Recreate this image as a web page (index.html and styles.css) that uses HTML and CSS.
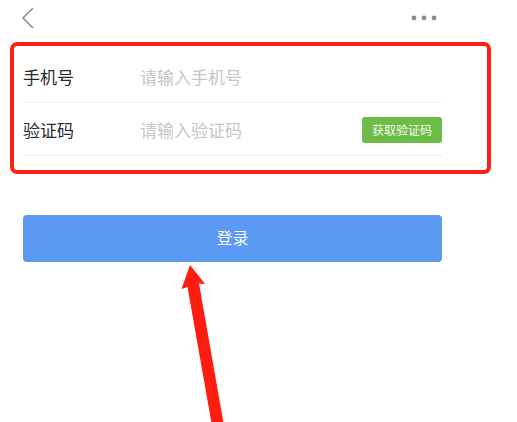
FILE: index.html
```html
<!DOCTYPE html>
<html lang="zh">
<head>
<meta charset="utf-8">
<title>登录</title>
<link rel="stylesheet" href="styles.css">
</head>
<body>
<div class="page">
  <header class="topbar">
    <svg class="back" width="14" height="22" viewBox="0 0 14 22" aria-hidden="true">
      <path d="M11.5 1.5 L2 11 L11.5 20.5" fill="none" stroke="#8a8a8a" stroke-width="1.6" stroke-linecap="round" stroke-linejoin="round"/>
    </svg>
    <svg class="more" width="26" height="6" viewBox="0 0 26 6" aria-hidden="true">
      <circle cx="3" cy="3" r="2.4" fill="#8c8c8c"/>
      <circle cx="13" cy="3" r="2.4" fill="#8c8c8c"/>
      <circle cx="23" cy="3" r="2.4" fill="#8c8c8c"/>
    </svg>
  </header>

  <section class="form">
    <div class="row">
      <span class="label">手机号</span>
      <span class="placeholder">请输入手机号</span>
    </div>
    <div class="row">
      <span class="label">验证码</span>
      <span class="placeholder">请输入验证码</span>
      <span class="code-btn">获取验证码</span>
    </div>
  </section>

  <div class="login-btn">登录</div>

  <svg class="arrow" width="517" height="422" viewBox="0 0 517 422" aria-hidden="true">
    <path d="M190 265 L205 284 L199 283.5 L223.5 423 L211.5 423 L187.5 287 L181.5 289 Z" fill="#ff1d12"/>
  </svg>
</div>
</body>
</html>
```

FILE: styles.css
```css
* { box-sizing: border-box; }
html, body {
  margin: 0;
  padding: 0;
  background: #ffffff;
}
body {
  font-family: "Noto Sans CJK SC", "Noto Sans", sans-serif;
  width: 517px;
  height: 422px;
  overflow: hidden;
}
.page {
  position: relative;
  width: 517px;
  height: 422px;
}
.topbar {
  height: 42px;
  display: flex;
  justify-content: space-between;
  align-items: flex-start;
  padding: 7px 80px 0 21px;
}
.topbar .more {
  margin-top: 8px;
}
.form {
  margin-left: 10px;
  width: 481px;
  border: 4px solid #ff2015;
  border-radius: 7px;
  padding: 4px 45px 14px 9px;
}
.row {
  display: flex;
  align-items: center;
  height: 53px;
  border-bottom: 1px solid #ececec;
}
.label {
  width: 117px;
  font-size: 17px;
  color: #2a2a2a;
}
.placeholder {
  flex: 1;
  font-size: 17px;
  color: #c6c6c6;
}
.code-btn {
  width: 80px;
  height: 26px;
  border-radius: 3px;
  background: #6cbd45;
  color: #f4fbef;
  font-size: 12px;
  display: flex;
  align-items: center;
  justify-content: center;
  margin-top: 1px;
}
.login-btn {
  margin: 41px 0 0 23px;
  width: 419px;
  height: 47px;
  padding-bottom: 3px;
  border-radius: 4px;
  background: #5a9af3;
  color: #f3f7fe;
  font-size: 16px;
  display: flex;
  align-items: center;
  justify-content: center;
}
.arrow {
  position: absolute;
  left: 0;
  top: 0;
  pointer-events: none;
}
```
